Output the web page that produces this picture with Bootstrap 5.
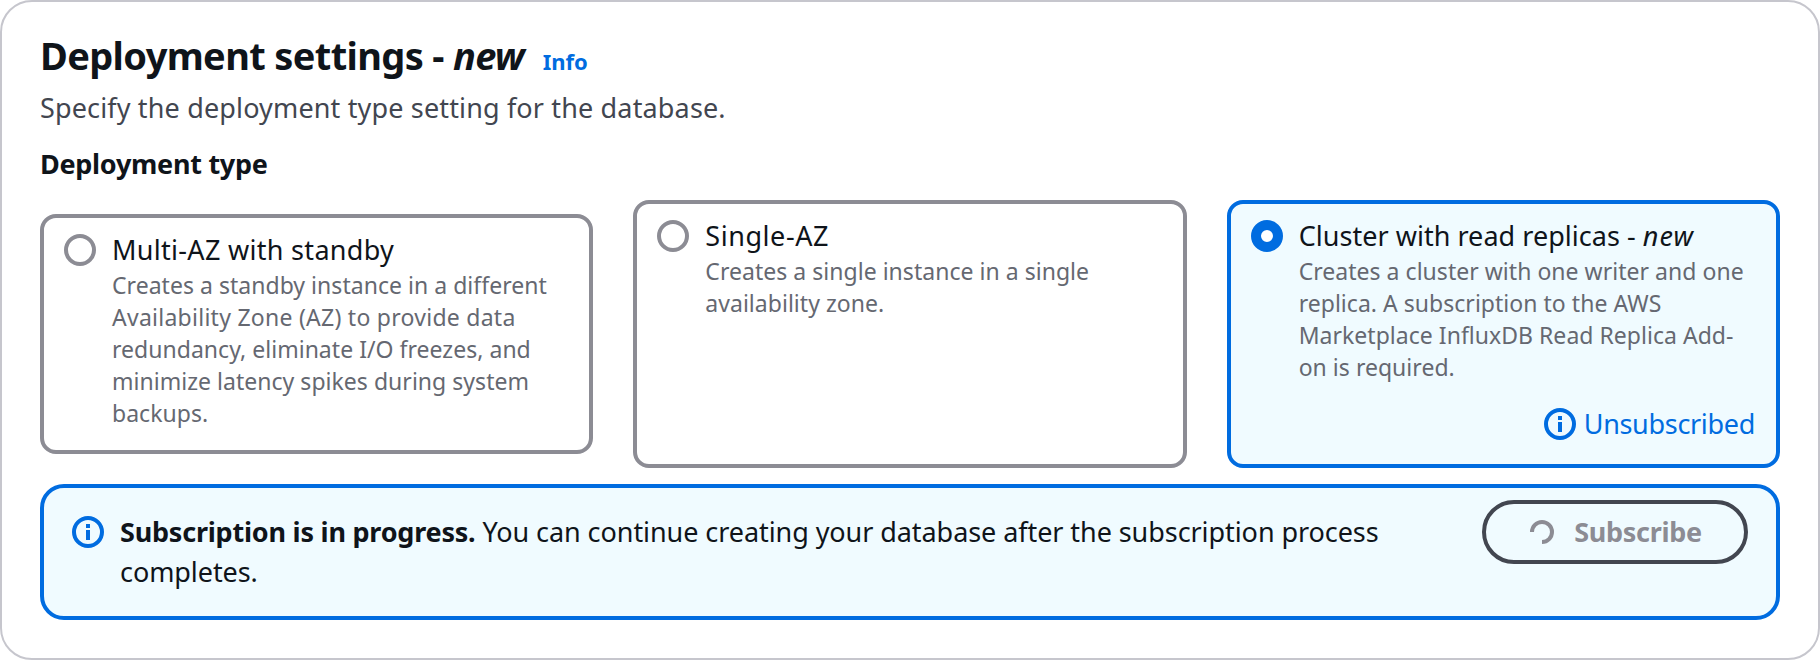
<!DOCTYPE html>
<html lang="en">
<head>
<meta charset="utf-8">
<meta name="viewport" content="width=device-width, initial-scale=1">
<title>Deployment settings</title>
<link href="https://cdn.jsdelivr.net/npm/bootstrap@5.3.0/dist/css/bootstrap.min.css" rel="stylesheet">
<style>
  :root { --ink: #0f141a; --accent: #006ce0; --tint: #f0fbff; --line: #8c8c94; --soft: #424650; }
  body { font-family: "Noto Sans", "Open Sans", sans-serif; font-size: 27px; line-height: 40px; color: var(--ink); background: #fff; }
  .panel { height: 660px; padding: 29px 38px 0; border: 2px solid #c6c6cd; border-radius: 32px; }
  .panel-title { font-size: 38px; line-height: 48px; letter-spacing: -.64px; font-weight: 700; white-space: pre; }
  .panel-title em { letter-spacing: -.9px; }
  .info-link { font-size: 22px; font-weight: 700; color: var(--accent); margin-left: 19px; line-height: 30px; }
  .panel-head { margin-bottom: 9px; }
  .panel-text { color: var(--soft); letter-spacing: .15px; }
  .field-label { font-weight: 700; letter-spacing: -.28px; margin-bottom: 16px; }
  .tiles { gap: 40px; }
  .tile { flex: 1 1 0; min-width: 0; padding: 16px 20px 21px; border: 4px solid var(--line); border-radius: 16px; gap: 16px; }
  .tile-tall { min-height: 268px; padding-bottom: 24px; }
  .tile-on { border-color: var(--accent); background: var(--tint); }
  .dot { flex: none; width: 32px; height: 32px; border: 4px solid var(--line); border-radius: 50%; background: #fff; }
  .tile-on .dot { border: 10px solid var(--accent); }
  .tile-title { line-height: 32px; margin-bottom: 3px; letter-spacing: .3px; }
  .tile-short { letter-spacing: .55px; }
  .tile-on .tile-title { letter-spacing: .03px; }
  .tile-on .tile-title em { letter-spacing: 1.1px; }
  .tile-text { font-size: 23px; line-height: 32px; color: #656871; letter-spacing: .03px; }
  .loose { letter-spacing: .26px; }
  .status { line-height: 32px; margin-top: 25px; gap: 8px; color: var(--accent); letter-spacing: -.32px; padding-right: 1px; }
  .icon { flex: none; width: 32px; height: 32px; }
  .notice { margin-top: 16px; height: 136px; padding: 12px 28px; border: 4px solid var(--accent); border-radius: 24px; background: var(--tint); }
  .notice .icon { margin-top: 16px; color: var(--accent); }
  .notice-text { margin: 12px 80px 0 16px; letter-spacing: -.07px; }
  .notice-text strong { letter-spacing: -.22px; }
  .btn-subscribe { width: 266px; height: 64px; gap: 20px; padding: 0 0 0 2px; border: 4px solid var(--soft); border-radius: 32px; font-size: 27px; line-height: 36px; font-weight: 700; letter-spacing: -.3px; }
  .btn-subscribe:disabled { color: var(--line); border-color: var(--soft); opacity: 1; }
</style>
</head>
<body>
<svg class="d-none">
  <symbol id="info" viewBox="0 0 32 32">
    <circle cx="16" cy="16" r="14" fill="none" stroke="currentColor" stroke-width="4"/>
    <path d="M14 8h4v4h-4zM14 14h4v10h-4z" fill="currentColor"/>
  </symbol>
</svg>
<main class="panel">
  <div class="panel-head d-flex align-items-baseline">
    <h1 class="panel-title m-0">Deployment settings - <em>new</em></h1>
    <a href="#" class="info-link text-decoration-none">Info</a>
  </div>
  <p class="panel-text mb-3">Specify the deployment type setting for the database.</p>
  <div class="field-label">Deployment type</div>

  <div class="tiles d-flex align-items-center">
    <div class="tile d-flex">
      <span class="dot"></span>
      <div>
        <div class="tile-title">Multi-AZ with standby</div>
        <div class="tile-text">
          <div>Creates a standby instance in a different</div>
          <div class="loose">Availability Zone (AZ) to provide data</div>
          <div>redundancy, eliminate I/O freezes, and minimize latency spikes during system backups.</div>
        </div>
      </div>
    </div>
    <div class="tile tile-tall d-flex">
      <span class="dot"></span>
      <div>
        <div class="tile-title tile-short">Single-AZ</div>
        <div class="tile-text">Creates a single instance in a single<br>availability zone.</div>
      </div>
    </div>
    <div class="tile tile-tall tile-on d-flex">
      <span class="dot"></span>
      <div class="flex-grow-1">
        <div class="tile-title">Cluster with read replicas - <em>new</em></div>
        <div class="tile-text">Creates a cluster with one writer and one replica. A subscription to the AWS Marketplace InfluxDB Read Replica Add-on is required.</div>
        <div class="status d-flex justify-content-end"><svg class="icon"><use href="#info"/></svg><span>Unsubscribed</span></div>
      </div>
    </div>
  </div>

  <div class="notice d-flex align-items-start" role="status">
    <svg class="icon"><use href="#info"/></svg>
    <div class="notice-text flex-grow-1"><strong>Subscription is in progress.</strong> You can continue creating your database after the subscription process completes.</div>
    <button type="button" class="btn btn-subscribe d-flex flex-shrink-0 align-items-center justify-content-center" disabled>
      <svg width="24" height="24" viewBox="0 0 24 24" fill="none" stroke="currentColor" stroke-width="4"><path d="M2 12A10 10 0 1 1 12 22"/></svg>
      <span>Subscribe</span>
    </button>
  </div>
</main>
<script src="https://cdn.jsdelivr.net/npm/bootstrap@5.3.0/dist/js/bootstrap.bundle.min.js"></script>
</body>
</html>
